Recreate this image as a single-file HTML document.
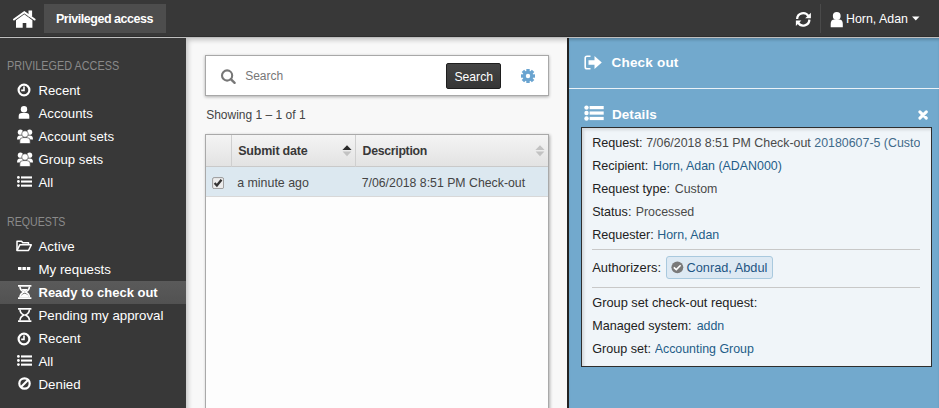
<!DOCTYPE html>
<html><head><meta charset="utf-8"><style>
html,body{margin:0;padding:0;width:939px;height:408px;overflow:hidden;background:#383838;}
body{position:relative;font-family:"Liberation Sans", sans-serif;}
.t{position:absolute;white-space:nowrap;}
.r{position:absolute;display:block;}
</style></head><body>
<div class="r" style="left:0px;top:0px;width:939px;height:37px;background:#383838;"></div>
<div class="r" style="left:0px;top:36px;width:939px;height:1px;background:#2e2e2e;"></div>
<div class="r" style="left:0px;top:37px;width:939px;height:1px;background:#bfbfbf;"></div>
<div class="r" style="left:0px;top:38px;width:186px;height:370px;background:#383838;"></div>
<div class="r" style="left:186px;top:38px;width:381px;height:370px;background:#f8f8f8;box-shadow: inset 5px 5px 5px -3px rgba(0,0,0,0.22);"></div>
<div class="r" style="left:567px;top:38px;width:2px;height:370px;background:#222;"></div>
<div class="r" style="left:569px;top:38px;width:370px;height:370px;background:#72a9cd;box-shadow: inset 0 3px 3px -1px rgba(0,0,0,0.2);"></div>
<svg class="r" style="left:12px;top:10px;" width="25" height="19" viewBox="0 0 25 19"><polyline points="2.0,9.5 12.3,2.2 22.6,9.5" fill="none" stroke="#fff" stroke-width="2.1" stroke-linecap="round" stroke-linejoin="miter"/><rect x="16.5" y="0.5" width="3.6" height="6" fill="#fff"/><polygon points="4,10.2 12.3,4.2 20.4,10.2 20.4,17.7 14.3,17.7 14.3,12.9 10.7,12.9 10.7,17.7 4,17.7" fill="#fff"/></svg>
<div class="r" style="left:44px;top:4px;width:122px;height:29px;background:#4d4d4d;"></div>
<div class="t" style="left:56px;top:12.00px;font-size:12.5px;line-height:14px;color:#fff;font-weight:700;letter-spacing:-0.47px;">Privileged access</div>
<svg class="r" style="left:795px;top:12px;" width="17" height="15" viewBox="0 0 17 15"><path d="M2.1,7.0 A6.1,6.1 0 0 1 13.4,4.2" fill="none" stroke="#fff" stroke-width="2.3"/><polygon points="15.9,0.8 15.9,6.3 10.2,6.3" fill="#fff"/><path d="M14.4,7.6 A6.1,6.1 0 0 1 3.1,10.6" fill="none" stroke="#fff" stroke-width="2.3"/><polygon points="0.9,14.0 0.9,8.5 6.4,8.5" fill="#fff"/></svg>
<div class="r" style="left:820px;top:4px;width:1px;height:29px;background:#4a4a4a;"></div>
<svg class="r" style="left:830px;top:11.5px;" width="14" height="16" viewBox="0 0 14 16"><circle cx="6.75" cy="4.0" r="3.9" fill="#fff"/><path d="M0.7,15.2 Q0.7,15.2 0.7,12 Q0.7,7.6 4.5,7.6 L9,7.6 Q12.8,7.6 12.8,12 L12.8,15.2 Z" fill="#fff"/></svg>
<div class="t" style="left:846px;top:12.00px;font-size:12.4px;line-height:14px;color:#fff;">Horn, Adan</div>
<svg class="r" style="left:912px;top:16px;" width="8" height="5" viewBox="0 0 8 5"><polygon points="0,0.5 7.5,0.5 3.75,4.5" fill="#fff"/></svg>
<div class="t" style="left:6.5px;top:59.00px;font-size:12.3px;line-height:14px;color:#8a8a8a;transform:scaleX(0.882);transform-origin:0 0;">PRIVILEGED ACCESS</div>
<div class="t" style="left:38.5px;top:83.00px;font-size:13.2px;line-height:15px;color:#fff;">Recent</div>
<div class="t" style="left:38.5px;top:106.00px;font-size:13.2px;line-height:15px;color:#fff;">Accounts</div>
<div class="t" style="left:38.5px;top:129.00px;font-size:13.2px;line-height:15px;color:#fff;">Account sets</div>
<div class="t" style="left:38.5px;top:152.00px;font-size:13.2px;line-height:15px;color:#fff;">Group sets</div>
<div class="t" style="left:38.5px;top:175.00px;font-size:13.2px;line-height:15px;color:#fff;">All</div>
<div class="t" style="left:6.5px;top:215.00px;font-size:12.2px;line-height:14px;color:#8a8a8a;transform:scaleX(0.872);transform-origin:0 0;">REQUESTS</div>
<div class="r" style="left:0px;top:281px;width:186px;height:23px;background:linear-gradient(#5a5a5a 0%,#565656 50%,#525252 100%);"></div>
<div class="t" style="left:38.5px;top:239.00px;font-size:13.3px;line-height:15px;color:#fff;">Active</div>
<div class="t" style="left:38.5px;top:262.00px;font-size:13.3px;line-height:15px;color:#fff;">My requests</div>
<div class="t" style="left:38.5px;top:285.00px;font-size:13px;line-height:15px;color:#fff;font-weight:700;">Ready to check out</div>
<div class="t" style="left:38.5px;top:308.00px;font-size:13.3px;line-height:15px;color:#fff;">Pending my approval</div>
<div class="t" style="left:38.5px;top:331.00px;font-size:13.3px;line-height:15px;color:#fff;">Recent</div>
<div class="t" style="left:38.5px;top:354.00px;font-size:13.3px;line-height:15px;color:#fff;">All</div>
<div class="t" style="left:38.5px;top:377.00px;font-size:13.3px;line-height:15px;color:#fff;">Denied</div>
<svg class="r" style="left:17.2px;top:83.2px;" width="14" height="14" viewBox="0 0 14 14"><circle cx="7" cy="7" r="5.4" fill="none" stroke="#fff" stroke-width="2.2"/><path d="M7,3.6 V7.4 H4.2" fill="none" stroke="#fff" stroke-width="1.6"/></svg>
<svg class="r" style="left:18px;top:106px;" width="12" height="13" viewBox="0 0 12 13"><circle cx="6" cy="3.3" r="3.2" fill="#fff"/><path d="M0.7,12.7 L0.7,10 Q0.7,6.9 3.8,6.9 L8.2,6.9 Q11.3,6.9 11.3,10 L11.3,12.7 Z" fill="#fff"/></svg>
<svg class="r" style="left:16.5px;top:128.8px;" width="16" height="15" viewBox="0 0 16 15"><circle cx="3.4" cy="3.2" r="2.6" fill="#fff"/><circle cx="12.6" cy="3.2" r="2.6" fill="#fff"/><path d="M0,10.5 Q0,6.5 3,6.5 L6,6.5 L6,10.5 Z" fill="#fff"/><path d="M16,10.5 Q16,6.5 13,6.5 L10,6.5 L10,10.5 Z" fill="#fff"/><circle cx="8" cy="5" r="3.3" fill="#fff" stroke="#383838" stroke-width="0.6"/><path d="M2.8,14.5 L2.8,11.8 Q2.8,8.6 6,8.6 L10,8.6 Q13.2,8.6 13.2,11.8 L13.2,14.5 Z" fill="#fff" stroke="#383838" stroke-width="0.6"/></svg>
<svg class="r" style="left:16.5px;top:151.5px;" width="16" height="15" viewBox="0 0 16 15"><circle cx="3.4" cy="3.2" r="2.6" fill="#fff"/><circle cx="12.6" cy="3.2" r="2.6" fill="#fff"/><path d="M0,10.5 Q0,6.5 3,6.5 L6,6.5 L6,10.5 Z" fill="#fff"/><path d="M16,10.5 Q16,6.5 13,6.5 L10,6.5 L10,10.5 Z" fill="#fff"/><circle cx="8" cy="5" r="3.3" fill="#fff" stroke="#383838" stroke-width="0.6"/><path d="M2.8,14.5 L2.8,11.8 Q2.8,8.6 6,8.6 L10,8.6 Q13.2,8.6 13.2,11.8 L13.2,14.5 Z" fill="#fff" stroke="#383838" stroke-width="0.6"/></svg>
<svg class="r" style="left:16.8px;top:176.3px;" width="15" height="11" viewBox="0 0 15 11"><circle cx="1.4" cy="1.4" r="1.4" fill="#fff"/><rect x="4.0" y="0.3999999999999999" width="11" height="2.1" fill="#fff"/><circle cx="1.4" cy="5.5" r="1.4" fill="#fff"/><rect x="4.0" y="4.5" width="11" height="2.1" fill="#fff"/><circle cx="1.4" cy="9.6" r="1.4" fill="#fff"/><rect x="4.0" y="8.6" width="11" height="2.1" fill="#fff"/></svg>
<svg class="r" style="left:16px;top:240px;" width="16" height="12" viewBox="0 0 16 12"><path d="M1,10.5 L1,1.2 L5.5,1.2 L6.8,2.8 L12.5,2.8 L12.5,4.8" fill="none" stroke="#fff" stroke-width="1.5" stroke-linejoin="round"/><path d="M1,10.5 L3.8,4.8 L15.3,4.8 L12.5,10.5 Z" fill="none" stroke="#fff" stroke-width="1.5" stroke-linejoin="round"/></svg>
<svg class="r" style="left:18px;top:267px;" width="13" height="3" viewBox="0 0 13 3"><rect x="0" y="0" width="3.5" height="3" fill="#fff"/><rect x="4.4" y="0" width="3.5" height="3" fill="#fff"/><rect x="8.8" y="0" width="3.5" height="3" fill="#fff"/></svg>
<svg class="r" style="left:17.6px;top:285px;" width="14" height="14" viewBox="0 0 14 14"><rect x="0" y="0" width="13.4" height="1.7" fill="#fff"/><rect x="0" y="12.3" width="13.4" height="1.7" fill="#fff"/><path d="M2.0,1.5 Q2.0,5.2 5.9,7.0 Q2.0,8.8 2.0,12.5 M11.4,1.5 Q11.4,5.2 7.5,7.0 Q11.4,8.8 11.4,12.5" fill="none" stroke="#fff" stroke-width="1.6"/><path d="M3.6,4.0 L9.8,4.0 Q9.2,5.6 6.7,6.6 Q4.2,5.6 3.6,4.0 Z" fill="#fff"/><path d="M2.4,12.4 Q2.8,9.4 6.7,8.4 Q10.6,9.4 11.0,12.4 Z" fill="#fff"/></svg>
<svg class="r" style="left:17.6px;top:308.2px;" width="14" height="14" viewBox="0 0 14 14"><rect x="0" y="0" width="13.4" height="1.7" fill="#fff"/><rect x="0" y="12.3" width="13.4" height="1.7" fill="#fff"/><path d="M2.0,1.5 Q2.0,5.2 5.9,7.0 Q2.0,8.8 2.0,12.5 M11.4,1.5 Q11.4,5.2 7.5,7.0 Q11.4,8.8 11.4,12.5" fill="none" stroke="#fff" stroke-width="1.6"/></svg>
<svg class="r" style="left:17px;top:331.5px;" width="14" height="14" viewBox="0 0 14 14"><circle cx="7" cy="7" r="5.4" fill="none" stroke="#fff" stroke-width="2.2"/><path d="M7,3.6 V7.4 H4.2" fill="none" stroke="#fff" stroke-width="1.6"/></svg>
<svg class="r" style="left:16.8px;top:355.4px;" width="15" height="11" viewBox="0 0 15 11"><circle cx="1.4" cy="1.4" r="1.4" fill="#fff"/><rect x="4.0" y="0.3999999999999999" width="11" height="2.1" fill="#fff"/><circle cx="1.4" cy="5.5" r="1.4" fill="#fff"/><rect x="4.0" y="4.5" width="11" height="2.1" fill="#fff"/><circle cx="1.4" cy="9.6" r="1.4" fill="#fff"/><rect x="4.0" y="8.6" width="11" height="2.1" fill="#fff"/></svg>
<svg class="r" style="left:17.5px;top:377px;" width="14" height="14" viewBox="0 0 14 14"><circle cx="6.5" cy="6.5" r="5.2" fill="none" stroke="#fff" stroke-width="2.2"/><line x1="3" y1="10" x2="10" y2="3" stroke="#fff" stroke-width="2.2"/></svg>
<div class="r" style="left:205px;top:55px;width:344px;height:41px;background:#fff;box-sizing:border-box;border:1px solid #a8a8a8;box-shadow:0 1px 3px rgba(0,0,0,0.3);"></div>
<svg class="r" style="left:220px;top:68px;" width="17" height="17" viewBox="0 0 17 17"><circle cx="7.1" cy="7.5" r="5.1" fill="none" stroke="#777" stroke-width="2.1"/><line x1="10.8" y1="11.2" x2="14.6" y2="14.8" stroke="#777" stroke-width="2.4" stroke-linecap="round"/></svg>
<div class="t" style="left:245.2px;top:69.00px;font-size:12px;line-height:14px;color:#777;">Search</div>
<div class="r" style="left:446px;top:63px;width:55px;height:26px;background:linear-gradient(#444,#363636);box-sizing:border-box;border:1px solid #1e1e1e;border-radius:2px;"></div>
<div class="t" style="left:454.4px;top:70.00px;font-size:12.2px;line-height:14px;color:#fff;">Search</div>
<svg class="r" style="left:521.3px;top:69.3px;" width="14" height="14" viewBox="0 0 14 14"><g><rect x="5.3" y="-0.2" width="3.4" height="4" fill="#6aa4d0" transform="rotate(0 7 7)"/><rect x="5.3" y="-0.2" width="3.4" height="4" fill="#6aa4d0" transform="rotate(45 7 7)"/><rect x="5.3" y="-0.2" width="3.4" height="4" fill="#6aa4d0" transform="rotate(90 7 7)"/><rect x="5.3" y="-0.2" width="3.4" height="4" fill="#6aa4d0" transform="rotate(135 7 7)"/><rect x="5.3" y="-0.2" width="3.4" height="4" fill="#6aa4d0" transform="rotate(180 7 7)"/><rect x="5.3" y="-0.2" width="3.4" height="4" fill="#6aa4d0" transform="rotate(225 7 7)"/><rect x="5.3" y="-0.2" width="3.4" height="4" fill="#6aa4d0" transform="rotate(270 7 7)"/><rect x="5.3" y="-0.2" width="3.4" height="4" fill="#6aa4d0" transform="rotate(315 7 7)"/><circle cx="7" cy="7" r="5.2" fill="#6aa4d0"/><circle cx="7" cy="7" r="2.2" fill="#fff"/></g></svg>
<div class="t" style="left:206.2px;top:108.00px;font-size:12px;line-height:14px;color:#444;">Showing 1 – 1 of 1</div>
<div class="r" style="left:205px;top:134px;width:344px;height:280px;background:#fdfdfd;box-sizing:border-box;border:1px solid #a9a9a9;box-shadow:1px 1px 3px rgba(0,0,0,0.3);"></div>
<div class="r" style="left:206px;top:135px;width:342px;height:32px;background:linear-gradient(#f4f4f4,#e2e2e2);"></div>
<div class="r" style="left:206px;top:166px;width:342px;height:1px;background:#c9c9c9;"></div>
<div class="r" style="left:231px;top:135px;width:1px;height:32px;background:#cfcfcf;"></div>
<div class="r" style="left:355px;top:135px;width:1px;height:32px;background:#cfcfcf;"></div>
<div class="t" style="left:238.2px;top:144.00px;font-size:12.5px;line-height:14px;color:#383838;font-weight:700;letter-spacing:-0.2px;">Submit date</div>
<div class="t" style="left:362.6px;top:144.00px;font-size:12.3px;line-height:14px;color:#383838;font-weight:700;letter-spacing:-0.3px;">Description</div>
<svg class="r" style="left:342px;top:145px;" width="10" height="12" viewBox="0 0 10 12"><polygon points="0.4,5.0 9.6,5.0 5.0,0.2" fill="#2a2a2a"/><polygon points="0.6,6.6 9.4,6.6 5.0,11.2" fill="#c2c2c2"/></svg>
<svg class="r" style="left:535px;top:145px;" width="10" height="12" viewBox="0 0 10 12"><polygon points="0.4,5.0 9.6,5.0 5.0,0.2" fill="#c2c2c2"/><polygon points="0.6,6.6 9.4,6.6 5.0,11.2" fill="#c2c2c2"/></svg>
<div class="r" style="left:206px;top:167px;width:342px;height:29px;background:#dce8f0;"></div>
<div class="r" style="left:206px;top:196px;width:342px;height:1px;background:#d8d8d8;"></div>
<svg class="r" style="left:212px;top:177px;" width="12" height="12" viewBox="0 0 12 12"><rect x="0.6" y="0.6" width="11" height="11" rx="1.5" fill="#ececec" stroke="#9a9a9a"/><path d="M2.6,6.0 L4.9,8.5 L9.5,2.8" fill="none" stroke="#333" stroke-width="2.3"/></svg>
<div class="t" style="left:237.2px;top:176.00px;font-size:12.4px;line-height:14px;color:#444;">a minute ago</div>
<div class="t" style="left:361.7px;top:176.00px;font-size:12.3px;line-height:14px;color:#444;">7/06/2018 8:51 PM Check-out</div>
<svg class="r" style="left:583.5px;top:55px;" width="19" height="15" viewBox="0 0 19 15"><path d="M6.5,1.2 H3 Q1.2,1.2 1.2,3 V12 Q1.2,13.8 3,13.8 H6.5" fill="none" stroke="#fff" stroke-width="1.6"/><path d="M4.5,5.2 H10.5 V1 L17.8,7.5 L10.5,14 V9.8 H4.5 Z" fill="#fff"/></svg>
<div class="t" style="left:611.5px;top:55.00px;font-size:13.5px;line-height:15px;color:#fff;font-weight:700;letter-spacing:0.2px;">Check out</div>
<div class="r" style="left:569px;top:88px;width:370px;height:1px;background:#eaf2f8;"></div>
<svg class="r" style="left:583.5px;top:105px;" width="21" height="16" viewBox="0 0 21 16"><circle cx="2.5" cy="2.6" r="2.2" fill="#fff"/><rect x="5.6" y="1.0" width="14.1" height="3.2" fill="#fff"/><circle cx="2.5" cy="8.05" r="2.2" fill="#fff"/><rect x="5.6" y="6.450000000000001" width="14.1" height="3.2" fill="#fff"/><circle cx="2.5" cy="13.5" r="2.2" fill="#fff"/><rect x="5.6" y="11.9" width="14.1" height="3.2" fill="#fff"/></svg>
<div class="t" style="left:611.9px;top:107.00px;font-size:13.5px;line-height:15px;color:#fff;font-weight:700;letter-spacing:0.1px;">Details</div>
<svg class="r" style="left:918px;top:109.5px;" width="11" height="10" viewBox="0 0 11 10"><path d="M1.9,1.9 L8.3,8.1 M8.3,1.9 L1.9,8.1" stroke="#fff" stroke-width="3.0" stroke-linecap="round"/></svg>
<div class="r" style="left:581px;top:127px;width:351px;height:240px;background:#f0f5f9;box-sizing:border-box;border:1px solid #2e2e2e;box-shadow: inset 2px 2px 3px rgba(0,0,0,0.12);overflow:hidden;"></div>
<div class="t" style="left:592.2px;top:136.00px;font-size:12.6px;line-height:14px;color:#222;">Request:</div>
<div class="t" style="left:646.2px;top:136px;font-size:12.4px;line-height:14px;color:#4a4a4a;width:273.79999999999995px;overflow:hidden;">7/06/2018 8:51 PM Check-out <span style="color:#3f6a8a">20180607-5 (Custom)</span></div>
<div class="t" style="left:592.2px;top:159.00px;font-size:12.6px;line-height:14px;color:#222;">Recipient:</div>
<div class="t" style="left:653.0px;top:159px;font-size:12.4px;line-height:14px;color:#245d88;width:266.99999999999994px;overflow:hidden;">Horn, Adan (ADAN000)</div>
<div class="t" style="left:592.2px;top:182.00px;font-size:12.6px;line-height:14px;color:#222;">Request type:</div>
<div class="t" style="left:674.7px;top:182px;font-size:12.4px;line-height:14px;color:#4a4a4a;width:245.29999999999995px;overflow:hidden;">Custom</div>
<div class="t" style="left:592.2px;top:205.00px;font-size:12.6px;line-height:14px;color:#222;">Status:</div>
<div class="t" style="left:635.7px;top:205px;font-size:12.4px;line-height:14px;color:#4a4a4a;width:284.29999999999995px;overflow:hidden;">Processed</div>
<div class="t" style="left:592.2px;top:228.00px;font-size:12.6px;line-height:14px;color:#222;">Requester:</div>
<div class="t" style="left:657.2px;top:228px;font-size:12.4px;line-height:14px;color:#245d88;width:262.79999999999995px;overflow:hidden;">Horn, Adan</div>
<div class="r" style="left:592px;top:249px;width:328px;height:1px;background:#c8c8c8;"></div>
<div class="t" style="left:592.2px;top:260.00px;font-size:12.9px;line-height:15px;color:#222;">Authorizers:</div>
<div class="r" style="left:666px;top:256px;width:107px;height:23px;background:#dde9f3;box-sizing:border-box;border:1px solid #a9c9de;border-radius:3px;"></div>
<svg class="r" style="left:670.5px;top:260.5px;" width="13" height="13" viewBox="0 0 13 13"><circle cx="6.35" cy="6.35" r="5.95" fill="#7a7a7a"/><path d="M2.8,6.3 L5.3,8.6 L9.6,4.2" fill="none" stroke="#fff" stroke-width="1.6"/></svg>
<div class="t" style="left:686.5px;top:260.00px;font-size:12.75px;line-height:15px;color:#1d5583;">Conrad, Abdul</div>
<div class="r" style="left:592px;top:287px;width:328px;height:1px;background:#c8c8c8;"></div>
<div class="t" style="left:592.2px;top:295.00px;font-size:12.8px;line-height:15px;color:#222;">Group set check-out request:</div>
<div class="t" style="left:592.2px;top:319.00px;font-size:12.6px;line-height:14px;color:#222;">Managed system:</div>
<div class="t" style="left:696.7px;top:319px;font-size:12.4px;line-height:14px;color:#245d88;width:223.29999999999995px;overflow:hidden;">addn</div>
<div class="t" style="left:592.2px;top:342.00px;font-size:12.6px;line-height:14px;color:#222;">Group set:</div>
<div class="t" style="left:654.7px;top:342px;font-size:12.4px;line-height:14px;color:#245d88;width:265.29999999999995px;overflow:hidden;">Accounting Group</div>
</body></html>
